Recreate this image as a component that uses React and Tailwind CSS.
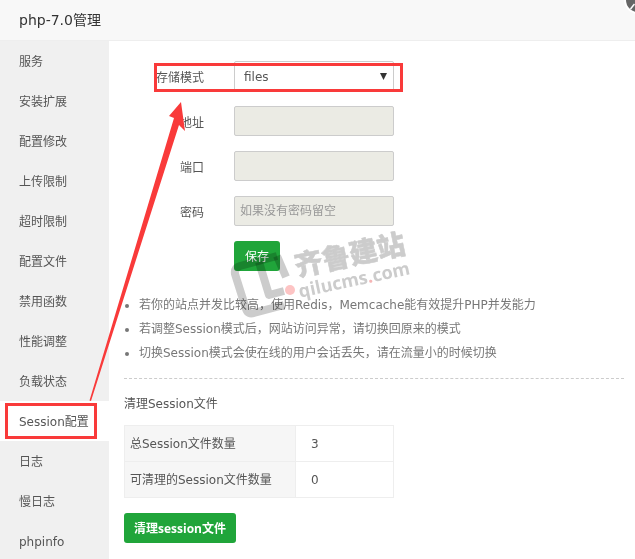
import React from 'react';

const menu = ['服务', '安装扩展', '配置修改', '上传限制', '超时限制', '配置文件', '禁用函数', '性能调整', '负载状态', 'Session配置', '日志', '慢日志', 'phpinfo'];
const font = { fontFamily: '"DejaVu Sans", "Noto Sans CJK SC", sans-serif' };

function Field({ label, placeholder }) {
    return (
        <div className="flex items-center h-[30px] mb-[15px]">
            <span className="w-[80px] pt-[3px] text-right text-[12px] text-[#555]">{label}</span>
            <input
                disabled
                placeholder={placeholder}
                className="ml-[30px] w-[160px] h-[30px] px-[5px] text-[12px] bg-[#ebebe4] border border-[#ccc] rounded-[2px] placeholder:text-[#999]"
            />
        </div>
    );
}

function Annotations() {
    return (
        <svg className="absolute left-0 top-0 pointer-events-none" width="635" height="559">
            <rect x="155.5" y="64.5" width="246" height="26" fill="none" stroke="#f93a3a" strokeWidth="3" />
            <rect x="6.5" y="404.5" width="89" height="33" fill="none" stroke="#f93a3a" strokeWidth="3" />
            <polygon points="181,102 185,131 179,125 91,401 89.5,400.5 174,118 169,116" fill="#f93a3a" />
        </svg>
    );
}

function Watermark() {
    return (
        <>
            <svg className="absolute left-0 top-0 pointer-events-none" width="635" height="559">
                <g fill="none" stroke="#000" strokeOpacity="0.2" strokeWidth="8" strokeLinejoin="round">
                    <path d="M277 256 L240 266 Q234 268 235 274 L246 309 Q248 315 254 313 L284 305" />
                    <path d="M259 262 L269 295 L284 291" />
                    <path d="M277 256 L286 277" />
                </g>
                <circle cx="290" cy="290" r="5" fill="#f93a3a" fillOpacity="0.3" />
            </svg>
            <div className="absolute left-[290px] top-[241px] w-[120px] h-[30px] -rotate-[12deg] text-center text-[28px] leading-[30px] font-black text-[#ccc] mix-blend-multiply [-webkit-text-stroke:0.5px_#ccc] whitespace-nowrap pointer-events-none">
                齐鲁建站
            </div>
            <div className="absolute left-[294px] top-[269px] w-[120px] h-[20px] -rotate-[12deg] text-center text-[18px] leading-[20px] font-bold text-[#ccc] mix-blend-multiply whitespace-nowrap pointer-events-none" style={{ fontFamily: '"Open Sans", sans-serif' }}>
                qilucms<span className="text-[#f5b5b5]">.</span>com
            </div>
        </>
    );
}

export default function App() {
    return (
        <div className="relative w-[635px] h-[559px] overflow-hidden bg-white text-[#555]" style={font}>
            <div className="h-[41px] bg-[#f8f8f8] border-b border-[#eee] pl-[19px] leading-[40px] text-[14px] text-[#333]">
                php-7.0管理
            </div>
            <svg className="absolute right-0 top-0" width="11" height="14" viewBox="0 0 11 14">
                <circle cx="14" cy="0" r="13" fill="#666" stroke="#fff" strokeWidth="2" />
                <path d="M6.5 9 L10.5 4" stroke="#fff" strokeWidth="1.5" />
            </svg>
            <div className="flex h-[518px]">
                <div className="w-[109px] shrink-0 bg-[#f0f0f0]">
                    {menu.map((item) => (
                        <div key={item} className={`h-[40px] leading-[42px] pl-[19px] text-[12px] text-[#555] ${item === 'Session配置' ? 'bg-white' : ''}`}>
                            {item}
                        </div>
                    ))}
                </div>
                <div className="flex-1 pl-[15px]">
                    <div className="pt-[20px]">
                        <div className="flex items-center h-[30px] mb-[15px]">
                            <span className="w-[80px] pt-[3px] text-right text-[12px] text-[#555]">存储模式</span>
                            <div className="relative ml-[30px] w-[160px] h-[30px] border border-[#ccc] bg-white pl-[9px] leading-[30px] text-[12px] text-[#555] rounded-[2px]">
                                files
                                <svg className="absolute right-[6px] top-[11px]" width="7" height="7" viewBox="0 0 7 7">
                                    <path d="M0 0 H7 L3.5 7 Z" fill="#333" />
                                </svg>
                            </div>
                        </div>
                        <Field label="地址" />
                        <Field label="端口" />
                        <Field label="密码" placeholder="如果没有密码留空" />
                        <button className="ml-[110px] w-[46px] h-[30px] pt-[2px] bg-[#20a53a] text-white text-[12px] rounded-[3px]">保存</button>
                    </div>
                    <ul className="mt-[22px] text-[12px] leading-[24px] text-[#777] list-disc pl-[15px] whitespace-nowrap">
                        <li>若你的站点并发比较高，使用Redis，Memcache能有效提升PHP并发能力</li>
                        <li>若调整Session模式后，网站访问异常，请切换回原来的模式</li>
                        <li>切换Session模式会使在线的用户会话丢失，请在流量小的时候切换</li>
                    </ul>
                    <div className="mt-[13px] w-[500px] border-t border-dashed border-[#ccc]" />
                    <div className="mt-[15px] text-[12px] leading-[20px] text-[#555]">清理Session文件</div>
                    <table className="mt-[11px] w-[270px] border-collapse text-[12px] text-[#555]">
                        <tbody>
                            <tr className="h-[36px]">
                                <td className="w-[171px] border border-[#eee] bg-[#f6f6f6] pl-[5px]">总Session文件数量</td>
                                <td className="border border-[#eee] pl-[15px]">3</td>
                            </tr>
                            <tr className="h-[36px]">
                                <td className="border border-[#eee] bg-[#f6f6f6] pl-[5px]">可清理的Session文件数量</td>
                                <td className="border border-[#eee] pl-[15px]">0</td>
                            </tr>
                        </tbody>
                    </table>
                    <button className="mt-[15px] w-[112px] h-[30px] pt-[2px] bg-[#20a53a] text-white text-[12px] font-bold rounded-[3px]" style={{ fontFamily: '"Open Sans", "Noto Sans CJK SC", sans-serif' }}>清理session文件</button>
                </div>
            </div>
            <Watermark />
            <Annotations />
        </div>
    );
}
